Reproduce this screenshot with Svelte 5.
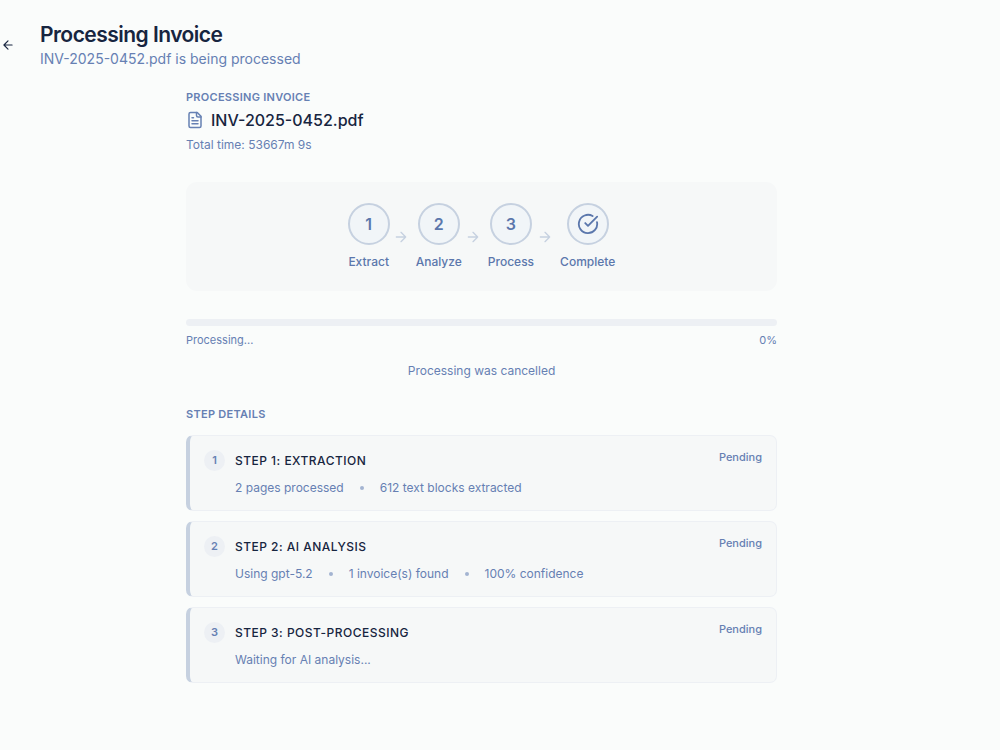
<script lang="ts">
	type Step = {
		id: number;
		label: string;
		title: string;
		status: string;
		details: string[];
	};

	const fileName = 'INV-2025-0452.pdf';
	const totalTime = '53667m 9s';

	let progress = $state(0);

	const STEPS: Step[] = [
		{
			id: 1,
			label: 'Extract',
			title: 'Step 1: Extraction',
			status: 'Pending',
			details: ['2 pages processed', '612 text blocks extracted']
		},
		{
			id: 2,
			label: 'Analyze',
			title: 'Step 2: AI Analysis',
			status: 'Pending',
			details: ['Using gpt-5.2', '1 invoice(s) found', '100% confidence']
		},
		{
			id: 3,
			label: 'Process',
			title: 'Step 3: Post-Processing',
			status: 'Pending',
			details: ['Waiting for AI analysis...']
		}
	];
</script>

<div class="page">
	<header class="header">
		<button type="button" class="back" aria-label="Back">
			<svg viewBox="0 0 24 24" width="14" height="14" aria-hidden="true">
				<path d="m12 19-7-7 7-7M19 12H5" />
			</svg>
		</button>
		<div>
			<h1>Processing Invoice</h1>
			<p class="subtitle">{fileName} is being processed</p>
		</div>
	</header>

	<main class="content">
		<section>
			<h2 class="eyebrow">Processing Invoice</h2>
			<div class="file">
				<svg viewBox="0 0 24 24" width="18" height="18" aria-hidden="true">
					<path d="M15 2H6a2 2 0 0 0-2 2v16a2 2 0 0 0 2 2h12a2 2 0 0 0 2-2V7Z" />
					<path d="M14 2v4a2 2 0 0 0 2 2h4M10 9H8M16 13H8M16 17H8" />
				</svg>
				<span>{fileName}</span>
			</div>
			<p class="time">Total time: {totalTime}</p>
		</section>

		<ol class="stepper">
			{#each STEPS as step (step.id)}
				<li class="stage">
					<span class="circle">{step.id}</span>
					<span class="stage-label">{step.label}</span>
				</li>
				<li class="arrow" aria-hidden="true">
					<svg viewBox="0 0 24 24" width="16" height="16">
						<path d="M5 12h14M12 5l7 7-7 7" />
					</svg>
				</li>
			{/each}
			<li class="stage">
				<span class="circle">
					<svg viewBox="0 0 24 24" width="22" height="22" aria-hidden="true">
						<path d="M21.801 10A10 10 0 1 1 17 3.335" />
						<path d="m9 11 3 3L22 4" />
					</svg>
				</span>
				<span class="stage-label">Complete</span>
			</li>
		</ol>

		<section class="progress">
			<div
				class="track"
				role="progressbar"
				aria-label="Processing"
				aria-valuenow={progress}
				aria-valuemin="0"
				aria-valuemax="100"
			>
				<div class="fill" style="width: {progress}%"></div>
			</div>
			<div class="progress-text">
				<span>Processing...</span>
				<span>{progress}%</span>
			</div>
			<p class="message">Processing was cancelled</p>
		</section>

		<section>
			<h2 class="eyebrow">Step Details</h2>
			<div class="cards">
				{#each STEPS as step (step.id)}
					<article class="card">
						<span class="badge">{step.id}</span>
						<div class="card-body">
							<h3>{step.title}</h3>
							<div class="details">
								{#each step.details as detail, i}
									{#if i > 0}<span class="dot"></span>{/if}
									<span>{detail}</span>
								{/each}
							</div>
						</div>
						<span class="status">{step.status}</span>
					</article>
				{/each}
			</div>
		</section>
	</main>
</div>

<style>
	:global(body) {
		background: #fafcfb;
	}
	.page {
		--ink: #172540;
		--muted: #6680b3;
		--strong: #5b77ac;
		--line: #c6d1e0;
		--soft: #edf0f4;
		--panel: #f6f8f8;
		padding: 21px 37px 40px 0;
		font-family: Inter, sans-serif;
		font-size: 12px;
		line-height: 18px;
		color: var(--muted);
	}
	h1,
	h2,
	h3,
	p,
	ol {
		margin: 0;
		padding: 0;
	}
	svg {
		display: block;
		fill: none;
		stroke: currentColor;
		stroke-width: 2;
		stroke-linecap: round;
		stroke-linejoin: round;
	}
	.header {
		display: flex;
		align-items: center;
		gap: 24px;
	}
	.back {
		display: flex;
		justify-content: flex-end;
		width: 16px;
		padding: 1px;
		border: none;
		background: none;
		color: var(--ink);
		cursor: pointer;
	}
	h1 {
		font-size: 21px;
		font-weight: 600;
		line-height: 28px;
		letter-spacing: -0.025em;
		color: var(--ink);
	}
	.subtitle {
		font-size: 14px;
		line-height: 20px;
	}
	.content {
		display: flex;
		flex-direction: column;
		max-width: 591px;
		margin: 19px auto 0;
	}
	.eyebrow {
		font-size: 11px;
		font-weight: 600;
		line-height: 18px;
		letter-spacing: 0.025em;
		text-transform: uppercase;
	}
	.file {
		display: flex;
		align-items: center;
		gap: 7px;
		margin: 2px 0;
		font-size: 16px;
		font-weight: 500;
		line-height: 24px;
	}
	.file span {
		color: var(--ink);
	}
	.time {
		line-height: 22px;
	}
	.stepper {
		display: flex;
		align-items: center;
		justify-content: center;
		gap: 3px;
		margin-top: 26px;
		padding: 21px 21px 20px;
		border-radius: 11px;
		background: var(--panel);
		list-style: none;
	}
	.stage {
		display: flex;
		flex-direction: column;
		align-items: center;
		gap: 8px;
		color: var(--strong);
	}
	.circle {
		display: flex;
		align-items: center;
		justify-content: center;
		box-sizing: border-box;
		width: 42px;
		height: 42px;
		border: 2px solid var(--line);
		border-radius: 50%;
		background: #f1f5f8;
		font-size: 16px;
		font-weight: 600;
	}
	.stage-label {
		font-weight: 500;
	}
	.arrow {
		margin-right: 4px;
		color: var(--line);
	}
	.progress {
		margin: 28px 0 24px;
	}
	.track {
		height: 7px;
		border-radius: 4px;
		background: var(--soft);
		overflow: hidden;
	}
	.fill {
		height: 100%;
		background: var(--strong);
	}
	.progress-text {
		display: flex;
		justify-content: space-between;
		margin-top: 6px;
		font-size: 11px;
		line-height: 16px;
	}
	.message {
		margin-top: 12px;
		line-height: 21px;
		text-align: center;
	}
	.cards {
		display: flex;
		flex-direction: column;
		gap: 10px;
		margin-top: 12px;
	}
	.card {
		display: flex;
		gap: 10px;
		padding: 14px 14px 13px;
		border: 1px solid var(--soft);
		border-left: 4px solid var(--line);
		border-radius: 7px;
		background: var(--panel);
	}
	.badge {
		width: 21px;
		height: 21px;
		border-radius: 50%;
		background: var(--soft);
		font-size: 11px;
		font-weight: 600;
		line-height: 21px;
		text-align: center;
	}
	.card-body {
		flex: 1;
	}
	h3 {
		font-size: 12px;
		font-weight: 500;
		line-height: 22px;
		letter-spacing: 0.04em;
		text-transform: uppercase;
		color: var(--ink);
	}
	.details {
		display: flex;
		flex-wrap: wrap;
		align-items: center;
		gap: 16px;
		margin-top: 7px;
	}
	.dot {
		width: 4px;
		height: 4px;
		border-radius: 50%;
		background: #a3b4d1;
	}
	.status {
		font-size: 11px;
		font-weight: 500;
		line-height: 14px;
	}
</style>
